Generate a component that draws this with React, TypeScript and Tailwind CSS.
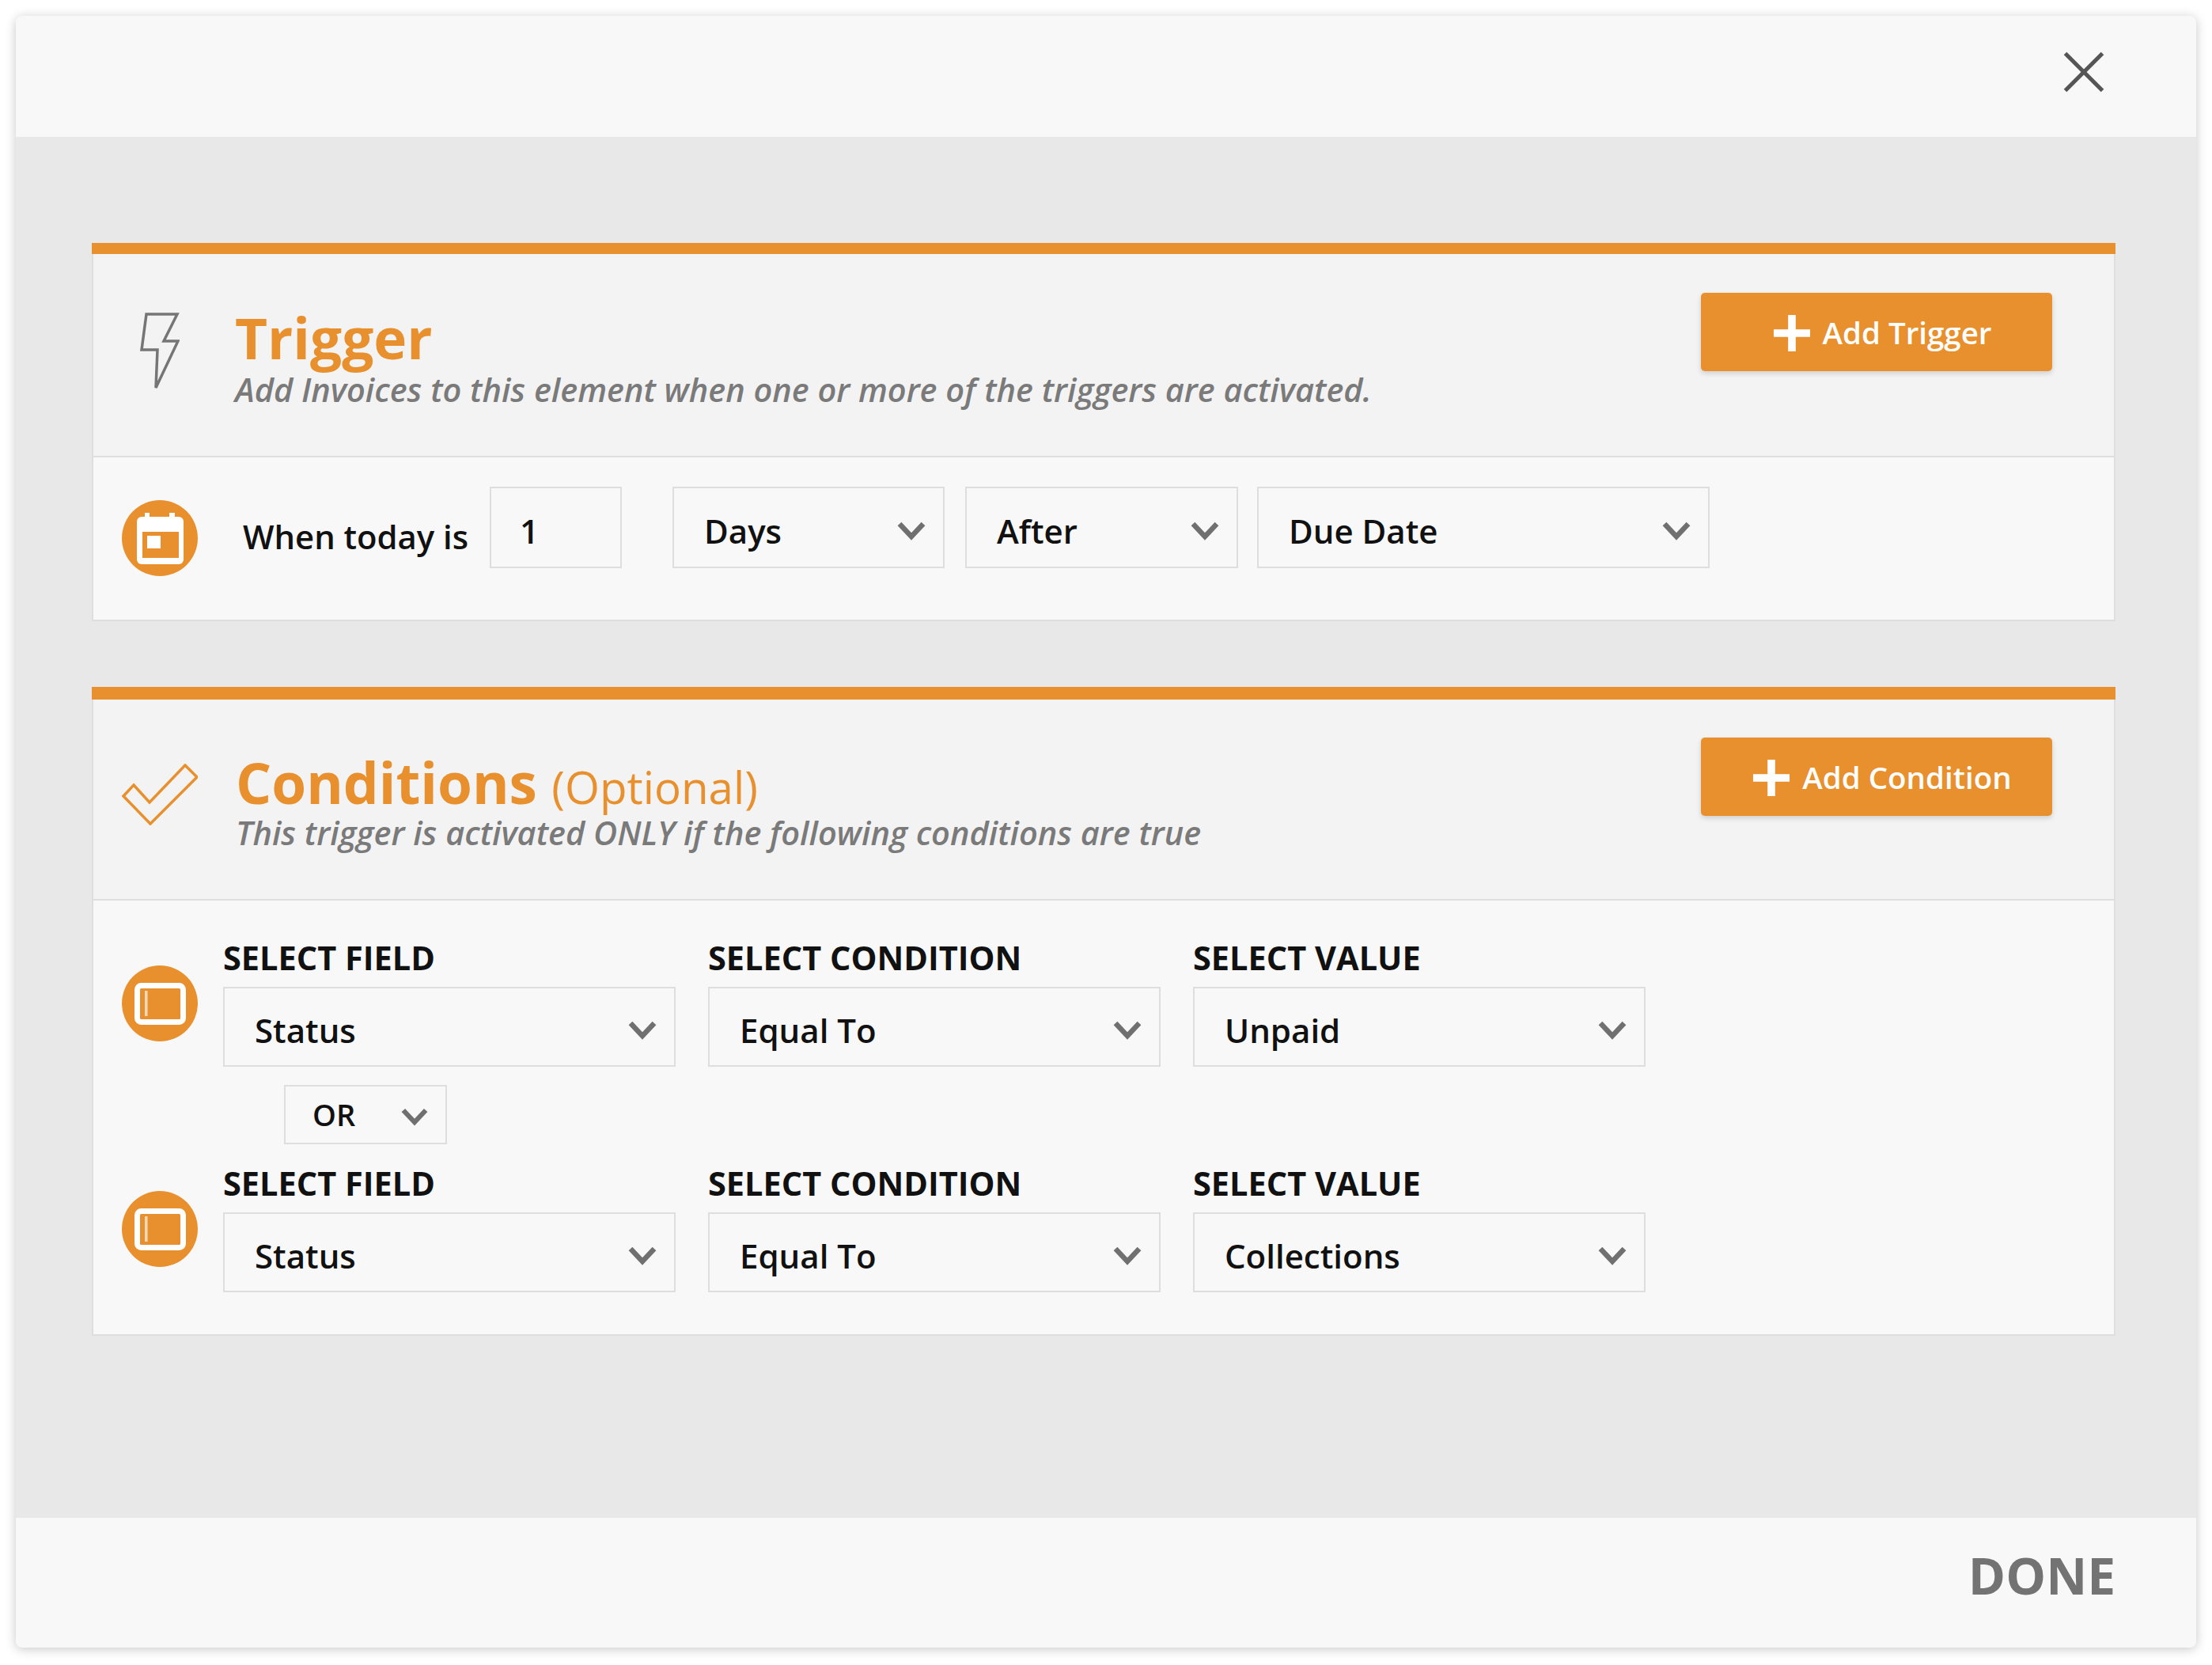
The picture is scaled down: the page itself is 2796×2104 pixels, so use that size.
import { X } from "lucide-react";

function Chevron({ small = false }: { small?: boolean }) {
  return (
    <svg viewBox="0 0 36 24" className={small ? "h-[23px] w-[34px] shrink-0" : "h-[24px] w-[36px] shrink-0"}>
      <path d="M3 3 L18 19 L33 3" fill="none" stroke="#707070" strokeWidth="6.5" />
    </svg>
  );
}

function Select({ value, className }: { value: string; className: string }) {
  return (
    <div
      className={`flex items-center justify-between border-2 border-[#dedede] pt-[8px] pl-[38px] pr-[22px] text-[42px] font-semibold text-[#111] ${className}`}
    >
      <span>{value}</span>
      <Chevron />
    </div>
  );
}

function PlusButton({ label }: { label: string }) {
  return (
    <button
      type="button"
      className="flex h-[99px] w-[444px] items-center justify-center gap-[15px] rounded-[5px] bg-[#e9902e] pt-[2px] pl-[14px] text-[38.5px] font-semibold text-white shadow-[0_3px_6px_rgba(0,0,0,0.15)]"
    >
      <svg viewBox="0 0 50 50" className="h-[48px] w-[48px] shrink-0">
        <path d="M25 1 V49 M1 25 H49" stroke="#fff" strokeWidth="10" />
      </svg>
      {label}
    </button>
  );
}

function CircleIcon({ children }: { children: React.ReactNode }) {
  return (
    <svg viewBox="0 0 96 96" className="h-[96px] w-[96px] shrink-0">
      <circle cx="48" cy="48" r="48" fill="#e9902e" />
      {children}
    </svg>
  );
}

function TabletIcon() {
  return (
    <CircleIcon>
      <rect x="19.5" y="25.5" width="58" height="46" rx="5" fill="none" stroke="#fff" strokeWidth="7" />
      <rect x="29" y="32" width="3.5" height="32" fill="#f8d9b5" />
    </CircleIcon>
  );
}

function ConditionRow({ value }: { value: string }) {
  const columns = [
    { label: "SELECT FIELD", value: "Status" },
    { label: "SELECT CONDITION", value: "Equal To" },
    { label: "SELECT VALUE", value },
  ];
  return (
    <div className="flex items-start">
      <div className="mt-[36px] mr-[32px]">
        <TabletIcon />
      </div>
      <div className="flex gap-[41.5px]">
        {columns.map((c) => (
          <div key={c.label} className="w-[571.5px]">
            <div className="h-[63px] text-[41.5px] leading-[53px] font-bold text-[#111]">{c.label}</div>
            <Select value={c.value} className="h-[101px]" />
          </div>
        ))}
      </div>
    </div>
  );
}

export default function App() {
  return (
    <div className="h-[2104px] w-[2796px] bg-white p-[20px] font-['Open_Sans',sans-serif]">
      <div className="flex h-[2062px] w-[2756px] flex-col overflow-hidden rounded-[8px] bg-[#e8e8e8] shadow-[0_2px_14px_rgba(0,0,0,0.22)]">
        <div className="flex h-[153px] shrink-0 items-start justify-end bg-[#f8f8f8] pt-[24px] pr-[95px]">
          <X className="h-[94px] w-[94px] text-[#555]" strokeWidth={1.3} strokeLinecap="butt" />
        </div>

        <div className="flex flex-1 flex-col gap-[83px] px-[96px] pt-[134px]">
          <section className="w-[2558px] border-t-[14px] border-[#e9902e]">
            <div className="border-x-2 border-b-2 border-[#dedede]">
              <div className="flex h-[257px] justify-between border-b-2 border-[#dedede] bg-[#f3f3f3] pt-[49px] pr-[78px] pl-[55px]">
                <div className="flex items-start">
                  <svg viewBox="0 0 54 100" className="mt-[24px] h-[100px] w-[54px]">
                    <path
                      d="M12 3 H51 L34 37 H52 L24 96 L26 48 H6 Z"
                      fill="none"
                      stroke="#757575"
                      strokeWidth="3.5"
                    />
                  </svg>
                  <div className="mt-[12px] ml-[70px]">
                    <div className="h-[82px] text-[71px] leading-[90px] font-bold text-[#e9902e]">Trigger</div>
                    <div className="text-[41.5px] leading-[56px] font-semibold text-[#7a7a7a] italic">
                      Add Invoices to this element when one or more of the triggers are activated.
                    </div>
                  </div>
                </div>
                <PlusButton label="Add Trigger" />
              </div>
              <div className="flex h-[205px] items-start bg-[#f8f8f8] pt-[37px] pl-[36px]">
                <div className="mt-[17px]">
                  <CircleIcon>
                    <rect x="19" y="21" width="59" height="60" rx="6" fill="#fff" />
                    <rect x="29" y="16" width="6" height="10" fill="#fff" />
                    <rect x="60" y="16" width="7" height="10" fill="#fff" />
                    <rect x="26" y="40" width="46" height="33" fill="#e9902e" />
                    <rect x="32" y="45" width="17" height="16" fill="#fff" />
                  </CircleIcon>
                </div>
                <div className="mt-[25px] ml-[57px] w-[312px] text-[41.8px] leading-[76px] font-semibold whitespace-nowrap text-[#111]">
                  When today is
                </div>
                <div className="flex h-[103px] w-[167px] items-center border-2 border-[#dedede] pt-[8px] pl-[36px] text-[42px] font-semibold text-[#111]">
                  1
                </div>
                <Select value="Days" className="ml-[64px] h-[103px] w-[344px]" />
                <Select value="After" className="ml-[26px] h-[103px] w-[345px]" />
                <Select value="Due Date" className="ml-[24px] h-[103px] w-[572px]" />
              </div>
            </div>
          </section>

          <section className="w-[2558px] border-t-[16px] border-[#e9902e]">
            <div className="border-x-2 border-b-2 border-[#dedede]">
              <div className="flex h-[254px] justify-between border-b-2 border-[#dedede] bg-[#f3f3f3] pt-[48px] pr-[78px] pl-[36px]">
                <div className="flex items-start">
                  <svg viewBox="0 0 96 78" className="mt-[33px] h-[78px] w-[96px]">
                    <path
                      d="M15 27 L35 49 L80 2 L95 17 L36 76 L2 41 Z"
                      fill="none"
                      stroke="#e9902e"
                      strokeWidth="3.5"
                    />
                  </svg>
                  <div className="mt-[12px] ml-[48px]">
                    <div className="h-[80px] text-[71px] leading-[90px] font-bold text-[#e9902e]">
                      Conditions <span className="text-[56.5px] font-normal">(Optional)</span>
                    </div>
                    <div className="text-[41.5px] leading-[56px] font-semibold text-[#7a7a7a] italic">
                      This trigger is activated ONLY if the following conditions are true
                    </div>
                  </div>
                </div>
                <PlusButton label="Add Condition" />
              </div>
              <div className="flex h-[548px] flex-col bg-[#f8f8f8] pt-[46px] pl-[36px]">
                <ConditionRow value="Unpaid" />
                <div className="mt-[23px] mb-[23px] ml-[205px] flex h-[75px] w-[206px] items-center justify-between border-2 border-[#dedede] pr-[22px] pl-[34px] text-[38px] font-semibold text-[#111]">
                  <span>OR</span>
                  <span className="pt-[6px]">
                    <Chevron small />
                  </span>
                </div>
                <ConditionRow value="Collections" />
              </div>
            </div>
          </section>
        </div>

        <div className="flex h-[164px] shrink-0 items-center justify-end bg-[#f8f8f8] pr-[102px] pb-[18px] text-[64px] font-bold text-[#737373]">
          DONE
        </div>
      </div>
    </div>
  );
}
